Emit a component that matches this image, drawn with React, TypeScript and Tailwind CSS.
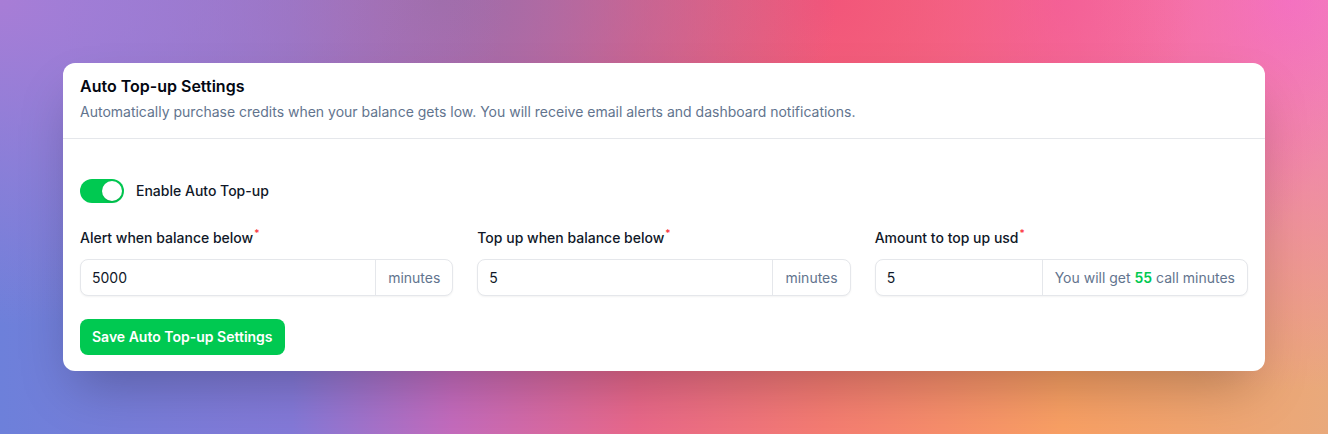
import { useState } from "react";

type Field = {
  label: string;
  value: string;
  suffix: "minutes" | "estimate";
};

const FIELDS: Field[] = [
  { label: "Alert when balance below", value: "5000", suffix: "minutes" },
  { label: "Top up when balance below", value: "5", suffix: "minutes" },
  { label: "Amount to top up usd", value: "5", suffix: "estimate" },
];

function Toggle({ on, onChange }: { on: boolean; onChange: (v: boolean) => void }) {
  return (
    <button
      type="button"
      role="switch"
      aria-checked={on}
      onClick={() => onChange(!on)}
      className={`flex h-6 w-11 shrink-0 items-center rounded-full p-0.5 transition-colors ${
        on ? "bg-green-500" : "bg-gray-200"
      }`}
    >
      <span
        className={`h-5 w-5 rounded-full bg-white shadow-sm transition-transform ${
          on ? "translate-x-5" : "translate-x-0"
        }`}
      />
    </button>
  );
}

function FieldInput({ field }: { field: Field }) {
  const [value, setValue] = useState(field.value);
  return (
    <div className="flex flex-col">
      <label className="mb-2.5 text-sm leading-5 font-medium text-gray-900">
        {field.label}
        <span className="relative -top-1.5 ml-px text-[10px] text-red-500">*</span>
      </label>
      <div className="flex h-[37px] overflow-hidden rounded-lg border border-gray-200 bg-white shadow-xs">
        <input
          value={value}
          onChange={(e) => setValue(e.target.value)}
          className="min-w-0 flex-1 bg-transparent pl-[11px] text-sm text-gray-900 outline-none"
        />
        <div className="flex items-center border-l border-gray-200 px-3 text-sm text-slate-500 whitespace-nowrap">
          {field.suffix === "minutes" ? (
            "minutes"
          ) : (
            <span>
              You will get <span className="font-semibold text-green-500">55</span> call minutes
            </span>
          )}
        </div>
      </div>
    </div>
  );
}

export default function App() {
  const [enabled, setEnabled] = useState(true);

  return (
    <div
      className="h-[434px] w-full overflow-hidden px-[63px] pt-[63px] font-['Inter',sans-serif] bg-[radial-gradient(38%_75%_at_0%_0%,#a87dd6_0%,transparent_100%),radial-gradient(30%_70%_at_33%_0%,#9f6ca6_0%,transparent_100%),radial-gradient(28%_75%_at_62%_0%,#f2557a_0%,transparent_100%),radial-gradient(22%_80%_at_80%_0%,#f566a6_0%,transparent_100%),radial-gradient(30%_90%_at_97%_0%,#f474c8_0%,transparent_100%),linear-gradient(to_right,#6d80da_0%,#8479d8_22%,#c46bbd_34%,#e9688a_48%,#f57c72_62%,#f9a064_80%,#e9a97b_100%)]"
    >
      <div className="w-full rounded-xl bg-white shadow-2xl">
        <div className="border-b border-gray-200 px-[17px] pt-[11px] pb-4">
          <h2 className="text-base leading-6 font-semibold text-gray-950">Auto Top-up Settings</h2>
          <p className="mt-1 text-sm leading-5 text-slate-500">
            Automatically purchase credits when your balance gets low. You will receive email alerts and dashboard
            notifications.
          </p>
        </div>

        <div className="px-[17px] pt-10 pb-4">
          <div className="flex items-center gap-3">
            <Toggle on={enabled} onChange={setEnabled} />
            <span className="text-sm leading-5 font-medium text-gray-900">Enable Auto Top-up</span>
          </div>

          <div className="mt-[25px] grid grid-cols-3 gap-6">
            {FIELDS.map((f) => (
              <FieldInput key={f.label} field={f} />
            ))}
          </div>

          <button
            type="button"
            className="mt-[23px] h-9 rounded-lg bg-green-500 px-3 text-sm font-semibold text-white"
          >
            Save Auto Top-up Settings
          </button>
        </div>
      </div>
    </div>
  );
}
